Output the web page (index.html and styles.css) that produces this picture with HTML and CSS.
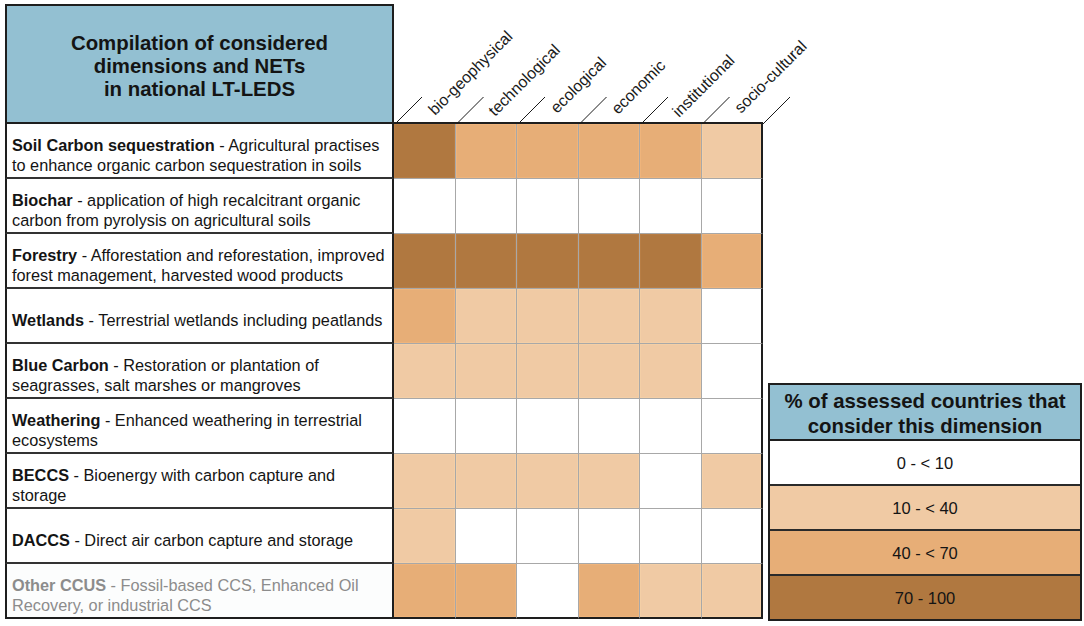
FILE: index.html
```html
<!DOCTYPE html>
<html lang="en">
<head>
<meta charset="utf-8">
<title>Compilation of considered dimensions and NETs</title>
<link rel="stylesheet" href="styles.css">
</head>
<body>
<div class="page">
  <div class="chart">
    <div class="title-cell">Compilation of considered<br>dimensions and NETs<br>in national LT-LEDS</div>
    <div class="dims">
      <svg class="dims-svg" width="369" height="120" viewBox="0 0 369 120">
        <g class="diag">
          <line x1="1" y1="120" x2="28" y2="93"/>
          <line x1="62.5" y1="120" x2="89.5" y2="93"/>
          <line x1="124" y1="120" x2="151" y2="93"/>
          <line x1="185.5" y1="120" x2="212.5" y2="93"/>
          <line x1="247" y1="120" x2="274" y2="93"/>
          <line x1="308.5" y1="120" x2="335.5" y2="93"/>
          <line x1="369" y1="120" x2="396" y2="93"/>
        </g>
        <g class="dim-labels">
          <text transform="translate(41 112) rotate(-45)">bio-geophysical</text>
          <text transform="translate(101 113) rotate(-45)">technological</text>
          <text transform="translate(163 110) rotate(-45)">ecological</text>
          <text transform="translate(224 111) rotate(-45)">economic</text>
          <text transform="translate(285 114) rotate(-45)">institutional</text>
          <text transform="translate(347 110) rotate(-45)">socio-cultural</text>
        </g>
      </svg>
    </div>

    <div class="label"><p><b>Soil Carbon sequestration</b> - Agricultural practises to enhance organic carbon sequestration in soils</p></div>
    <div class="cell c-d"></div><div class="cell c-m"></div><div class="cell c-m"></div><div class="cell c-m"></div><div class="cell c-m"></div><div class="cell c-l last"></div>

    <div class="label"><p><b>Biochar</b> - application of high recalcitrant organic carbon from pyrolysis on agricultural soils</p></div>
    <div class="cell"></div><div class="cell"></div><div class="cell"></div><div class="cell"></div><div class="cell"></div><div class="cell last"></div>

    <div class="label"><p><b>Forestry</b> - Afforestation and reforestation, improved forest management, harvested wood products</p></div>
    <div class="cell c-d"></div><div class="cell c-d"></div><div class="cell c-d"></div><div class="cell c-d"></div><div class="cell c-d"></div><div class="cell c-m last"></div>

    <div class="label"><p><b>Wetlands</b> - Terrestrial wetlands including peatlands</p></div>
    <div class="cell c-m"></div><div class="cell c-l"></div><div class="cell c-l"></div><div class="cell c-l"></div><div class="cell c-l"></div><div class="cell last"></div>

    <div class="label"><p><b>Blue Carbon</b> - Restoration or plantation of seagrasses, salt marshes or mangroves</p></div>
    <div class="cell c-l"></div><div class="cell c-l"></div><div class="cell c-l"></div><div class="cell c-l"></div><div class="cell c-l"></div><div class="cell last"></div>

    <div class="label"><p><b>Weathering</b> - Enhanced weathering in terrestrial ecosystems</p></div>
    <div class="cell"></div><div class="cell"></div><div class="cell"></div><div class="cell"></div><div class="cell"></div><div class="cell last"></div>

    <div class="label"><p><b>BECCS</b> - Bioenergy with carbon capture and storage</p></div>
    <div class="cell c-l"></div><div class="cell c-l"></div><div class="cell c-l"></div><div class="cell c-l"></div><div class="cell"></div><div class="cell c-l last"></div>

    <div class="label"><p><b>DACCS</b> - Direct air carbon capture and storage</p></div>
    <div class="cell c-l"></div><div class="cell"></div><div class="cell"></div><div class="cell"></div><div class="cell"></div><div class="cell last"></div>

    <div class="label label-muted bottom"><p><b>Other CCUS</b> - Fossil-based CCS, Enhanced Oil Recovery, or industrial CCS</p></div>
    <div class="cell c-m bottom"></div><div class="cell c-m bottom"></div><div class="cell bottom"></div><div class="cell c-m bottom"></div><div class="cell c-l bottom"></div><div class="cell c-l last bottom"></div>
  </div>

  <div class="legend">
    <div class="legend-title">% of assessed countries that<br>consider this dimension</div>
    <div class="legend-row">0 - &lt; 10</div>
    <div class="legend-row c-l">10 - &lt; 40</div>
    <div class="legend-row c-m">40 - &lt; 70</div>
    <div class="legend-row c-d">70 - 100</div>
  </div>
</div>
</body>
</html>
```

FILE: styles.css
```css
html, body {
  margin: 0;
  padding: 0;
  background: #ffffff;
}

body {
  width: 1084px;
  height: 626px;
  overflow: hidden;
  font-family: "Liberation Sans", Arial, Helvetica, sans-serif;
  color: #141414;
}

.page {
  display: flex;
  align-items: flex-end;
  gap: 5px;
  padding: 4px 0 0 5px;
}

.chart {
  display: grid;
  grid-template-columns: 389px repeat(6, 61.5px);
  grid-template-rows: 120px repeat(9, 55px);
}

.title-cell {
  box-sizing: border-box;
  background: #93c0d2;
  border: 2px solid #1e1e1e;
  display: flex;
  align-items: center;
  justify-content: center;
  text-align: center;
  font-weight: bold;
  font-size: 20.4px;
  line-height: 23px;
  padding-top: 4px;
}

.dims {
  grid-column: 2 / span 6;
  box-sizing: border-box;
  border-bottom: 2px solid #1e1e1e;
}

.dims-svg {
  display: block;
  overflow: visible;
}

.diag line {
  stroke: #1a1a1a;
  stroke-width: 1;
}

.dim-labels text {
  font-family: "Liberation Sans", Arial, Helvetica, sans-serif;
  font-size: 16px;
  fill: #1a1a1a;
}

.label {
  box-sizing: border-box;
  border-left: 2px solid #1e1e1e;
  border-right: 2px solid #1e1e1e;
  border-bottom: 2px solid #333333;
  display: flex;
  align-items: center;
  padding: 9px 4px 0 5px;
  font-size: 16.3px;
  line-height: 20px;
}

.label p {
  margin: 0;
}

.label-muted {
  color: #8c8c8c;
  background: #fcfdfd;
}

.label.bottom {
  border-bottom-color: #1e1e1e;
}

.cell {
  box-sizing: border-box;
  border-right: 1px solid #a8a8a8;
  border-bottom: 1px solid #a8a8a8;
  background: #ffffff;
}

.cell.last {
  border-right: 2px solid #1e1e1e;
}

.cell.bottom {
  border-bottom: 2px solid #1e1e1e;
}

.c-l {
  background: #f0caa4;
  box-shadow: inset 0 0 0 1px #f4cfa6;
}

.c-m {
  background: #e7ae77;
  box-shadow: inset 0 0 0 1px #efb47b;
}

.c-d {
  background: #b07840;
  box-shadow: inset 0 0 0 1px #b77d44;
}

.legend {
  box-sizing: border-box;
  width: 314px;
  border: 2px solid #1e1e1e;
  margin-bottom: -2px;
}

.legend-title {
  height: 56px;
  box-sizing: border-box;
  background: #93c0d2;
  border-bottom: 2px solid #1e1e1e;
  display: flex;
  align-items: center;
  justify-content: center;
  text-align: center;
  font-weight: bold;
  font-size: 20.4px;
  line-height: 25px;
  padding-top: 4px;
}

.legend-row {
  height: 45px;
  box-sizing: border-box;
  border-bottom: 2px solid #2a2a2a;
  display: flex;
  align-items: center;
  justify-content: center;
  font-size: 16.5px;
  padding-top: 2px;
  box-shadow: none;
}

.legend-row:last-child {
  border-bottom: none;
  height: 43px;
}
```
